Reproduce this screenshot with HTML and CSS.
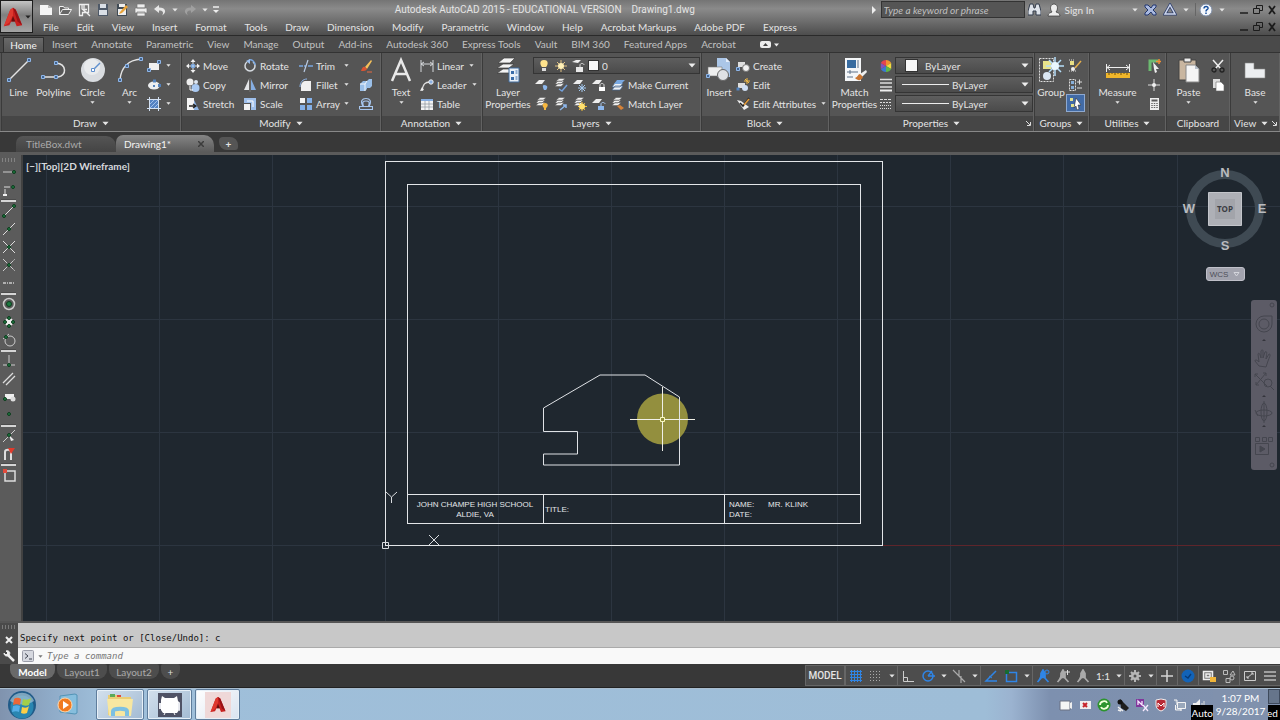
FILE: index.html
```html
<!DOCTYPE html>
<html lang="en">
<head>
<meta charset="utf-8">
<title>Autodesk AutoCAD 2015 - Drawing1.dwg</title>
<link rel="stylesheet" href="styles.css">
</head>
<body>
<svg class="sprite" aria-hidden="true">
  <symbol id="arr" viewBox="0 0 8 5"><path d="M0.5 0.5h7L4 4.5z" fill="currentColor"/></symbol>
  <symbol id="winmin" viewBox="0 0 12 12"><path d="M2 9h8" stroke="#1c1c1c" stroke-width="1.5"/></symbol>
  <symbol id="winres" viewBox="0 0 12 12"><path d="M4.500 4.500v-3h6v5h-3M1.500 4.500h6v5h-6z" fill="none" stroke="#1c1c1c"/></symbol>
  <symbol id="winx" viewBox="0 0 12 12"><path d="M3 2l6 8M9 2L3 10" stroke="#1c1c1c" stroke-width="1.800"/></symbol>
  <symbol id="sheets" viewBox="0 0 14 14"><path d="M1 8.500l3-3h6l-3 3z M1 6l3-3h6l-3 3z M2 3.500l3-3h6l-3 3z" fill="#f1f1f1" stroke="#555" stroke-width=".5"/></symbol>
  <symbol id="sheet" viewBox="0 0 14 14"><path d="M0 6l4-4h6l-3 4z" fill="#ededed"/></symbol>
  <symbol id="fig" viewBox="0 0 14 14"><path d="M7 1v6L1.500 13M7 7l5.500 6M5 4.500L7 1l2 3.500v4H5z" fill="currentColor" stroke="currentColor" stroke-width="1.700"/></symbol>
  <symbol id="acad" viewBox="0 0 24 24"><path d="M12 2l3 2 7 17-6 1-2-5h-4l-2 4-6 1L9 4z" fill="#c8201f"/><path d="M12 2L9 4 2 22l6-4 4-8z" fill="#de382f"/><path d="M10 17l2-6 2.500 6z" fill="#661010"/><path d="M12 2l3 2 7 17-5-4z" fill="#991116"/></symbol>
</svg>

<header class="top">
  <button class="appbtn" aria-label="Application menu"><svg width="22" height="26"><use href="#acad"/></svg><svg class="arr" width="6" height="4"><use href="#arr"/></svg></button>
  <div class="bars">
    <div class="titlebar">
      <div class="qat">
        <button aria-label="New"><svg width="14" height="14"><path d="M1 2h8l4 3v7H1z" fill="#f5f5f5"/><path d="M9 2v3h4" fill="#bbb"/></svg></button>
        <button aria-label="Open"><svg width="14" height="14"><path d="M1.500 11.500v-8h4l1 1.500h4v2M1.500 11.500l3-5h9l-3 5z" fill="#666" stroke="#f1f1f1"/></svg></button>
        <button aria-label="Open from cloud"><svg width="14" height="14"><path d="M2.500 1.500h9v8h-6v3h-3zM5 1v5l5 4 3 3M7 1.500v5h3" fill="#777" stroke="#eee" stroke-width="1.300"/></svg></button>
        <button aria-label="Save"><svg width="14" height="14"><path d="M2 1h10v12H2z" fill="#4e5968"/><path d="M4 1h6v4H4zM3 7h8v5H3z" fill="#dadfe6"/></svg></button>
        <button aria-label="Save as"><svg width="14" height="14"><path d="M2 1h10v12H2z" fill="#414b55"/><path d="M4 1h6v3H4zM3 6h8v6H3z" fill="#eee"/><path d="M5 9l6-7 2 2-6 6-3 1z" fill="#e8a33a"/></svg></button>
        <button aria-label="Plot"><svg width="14" height="14"><path d="M3 1h8v4H3zM1 5h12v5H1zM3 9h8v4H3z" fill="#eee" stroke="#777" stroke-width=".7"/></svg></button>
        <button aria-label="Undo"><svg width="14" height="14"><path d="M6 2L1 6l5 4V7.500c4 0 5 2 3 5 5-3 4-8-3-8z" fill="#e6e6e6"/></svg></button>
        <button class="slim" aria-label="Undo list"><svg width="6" height="4"><use href="#arr"/></svg></button>
        <button class="dim" aria-label="Redo"><svg width="14" height="14"><path d="M8 2l5 4-5 4V7.500c-4 0-5 2-3 5C0 9.500 1 4.500 8 4.500z" fill="#a0a0a0"/></svg></button>
        <button class="slim" aria-label="Redo list"><svg width="6" height="4"><use href="#arr"/></svg></button>
        <button class="slim" aria-label="Customize"><svg width="8" height="8"><path d="M1 1h6" stroke="#eee" stroke-width="1.500"/><path d="M1 4h6L4 7z" fill="#eee"/></svg></button>
      </div>
      <h1 class="title"><span>Autodesk AutoCAD 2015 - EDUCATIONAL VERSION</span><span>Drawing1.dwg</span></h1>
      <div class="info">
        <svg width="5" height="8"><path d="M1 0l4 4-4 4z" fill="#eee"/></svg>
        <input class="search" type="text" placeholder="Type a keyword or phrase" aria-label="Search">
        <button aria-label="Find"><svg width="13" height="14"><path d="M2 1h3l1 4h1l1-4h3l2 7v4H8V8H5v4H0V8z" fill="#dde2ea" stroke="#333c4c"/></svg></button>
        <button class="sign"><svg width="14" height="14"><path d="M1 13c0-3 3-3.500 4-4-3-4-1-8 2-8s5 4 2 8c1 .5 4 1 4 4z" fill="#eee" stroke="#333" stroke-width=".7"/></svg>Sign In</button>
        <svg class="arrow" width="6" height="4"><use href="#arr"/></svg>
        <button aria-label="Exchange"><svg width="13" height="12"><path d="M1 1h3l3 3 2-3h3v2L9 6l3 3v2H9L7 8l-3 3H1V9l3-3-3-3z" fill="#a9b9e0" stroke="#22376f"/></svg></button>
        <button aria-label="A360"><svg width="14" height="13"><path d="M7 2l5 9H2z" fill="none" stroke="#30406d" stroke-width="3"/><path d="M7 2l5 9H2z" fill="none" stroke="#cfd8ee" stroke-width="1.500"/></svg></button>
        <svg class="arrow" width="6" height="4"><use href="#arr"/></svg>
        <i class="rule"></i>
        <button aria-label="Help"><svg width="14" height="14"><circle cx="7" cy="7" r="6" fill="#f5f7fb" stroke="#7f8fa9"/><path d="M5 5.500C5 2.500 9.500 3 9 5.500 8.500 7 7 6.500 7 8.500M7 9.500v1.500" fill="none" stroke="#174f9d" stroke-width="1.500"/></svg></button>
        <svg class="arrow" width="6" height="4"><use href="#arr"/></svg>
      </div>
      <div class="win"><button aria-label="Minimize"><svg width="12" height="12"><use href="#winmin"/></svg></button><button aria-label="Restore"><svg width="12" height="12"><use href="#winres"/></svg></button><button aria-label="Close"><svg width="12" height="12"><use href="#winx"/></svg></button></div>
    </div>
    <div class="menubar">
      <nav class="menus"><button>File</button><button>Edit</button><button>View</button><button>Insert</button><button>Format</button><button>Tools</button><button>Draw</button><button>Dimension</button><button>Modify</button><button>Parametric</button><button>Window</button><button>Help</button><button>Acrobat Markups</button><button>Adobe PDF</button><button>Express</button></nav>
      <div class="win"><button aria-label="Minimize drawing"><svg width="12" height="12"><use href="#winmin"/></svg></button><button aria-label="Restore drawing"><svg width="12" height="12"><use href="#winres"/></svg></button><button aria-label="Close drawing"><svg width="12" height="12"><use href="#winx"/></svg></button></div>
    </div>
  </div>
</header>

<nav class="tabs">
  <button class="on">Home</button><button>Insert</button><button>Annotate</button><button>Parametric</button><button>View</button><button>Manage</button><button>Output</button><button>Add-ins</button><button>Autodesk 360</button><button>Express Tools</button><button>Vault</button><button>BIM 360</button><button>Featured Apps</button><button>Acrobat</button>
  <button class="mini" aria-label="Minimize ribbon"><svg width="19" height="7"><rect x="0" y="0" width="11" height="7" rx="2" fill="#eee"/><path d="M3 5l2.500-3L8 5z" fill="#444"/><path d="M14 2.500h5l-2.500 3z" fill="#eee"/></svg></button>
</nav>

<main class="ribbon">
  <section class="panel">
    <div class="body draw">
      <button class="big"><svg width="26" height="26"><path d="M3 23L23 3" stroke="#e3e3e3" stroke-width="1.500"/><path d="M1.500 21.500h3v3h-3zM21.500 1.500h3v3h-3z" fill="#42658f" stroke="#8fb6ea"/></svg>Line</button>
      <button class="big"><svg width="26" height="26"><path d="M2 20h15c9-1 9-13-2-14" fill="none" stroke="#e3e3e3" stroke-width="1.500"/><path d="M.5 18.500h3v3h-3zM13.500 18.500h3v3h-3zM13.500 4.500h3v3h-3z" fill="#42658f" stroke="#8fb6ea"/></svg>Polyline</button>
      <button class="big"><svg width="26" height="26"><circle cx="13" cy="13" r="12" fill="#d9dce0"/><circle cx="12" cy="10" r="8" fill="#e9ebed"/><path d="M13 13l7-7" stroke="#5f8fce" stroke-width="1.500"/><path d="M11.500 11.500h3v3h-3z" fill="#fff" stroke="#5f8fce"/></svg>Circle<svg class="arr" width="5" height="3"><use href="#arr"/></svg></button>
      <button class="big"><svg width="26" height="26"><path d="M3 23C4 10 12 3 24 2" fill="none" stroke="#e3e3e3" stroke-width="1.500"/><path d="M1.500 21.500h3v3h-3zM8.500 7.500h3v3h-3zM22.500.5h3v3h-3z" fill="#42658f" stroke="#8fb6ea"/></svg>Arc<svg class="arr" width="5" height="3"><use href="#arr"/></svg></button>
      <div class="rows">
        <button aria-label="Rectangle"><svg width="14" height="14"><path d="M2 4h10v7H2z" fill="#f0f0f0"/><path d="M.5 9.500h3v3h-3zM10.500 1.500h3v3h-3z" fill="#42658f" stroke="#8fb6ea"/></svg><svg class="arr" width="5" height="3"><use href="#arr"/></svg></button>
        <button aria-label="Ellipse"><svg width="14" height="14"><ellipse cx="7" cy="7.500" rx="6" ry="4" fill="#eceef0"/><path d="M6 1.500h3v3H6zM11 6h3v3h-3zM6 7h2v2H6z" fill="#5482bb"/></svg><svg class="arr" width="5" height="3"><use href="#arr"/></svg></button>
        <button aria-label="Hatch"><svg width="14" height="14"><path d="M3 3h8v8H3z" fill="#5482c2"/><path d="M3 7l4-4M3 11l8-8M7 11l4-4" stroke="#b5cff2" stroke-width=".8"/><path d="M2.500 0v14M11.500 0v14M0 2.500h14M0 11.500h14" stroke="#d4e1f3"/></svg><svg class="arr" width="5" height="3"><use href="#arr"/></svg></button>
      </div>
    </div>
    <h2>Draw<svg width="7" height="5"><use href="#arr"/></svg></h2>
  </section>

  <section class="panel">
    <div class="body modify">
      <div class="rows">
        <button><svg width="14" height="14"><path d="M7 0l2.500 3h-5zM7 14l2.500-3h-5zM0 7l3-2.500v5zM14 7l-3-2.500v5z" fill="#f1f1f1"/><path d="M5.500 5.500h3v3h-3z" fill="#9cc2ec" stroke="#78a4dc"/><path d="M7 3v2M7 9v2M3 7h2M9 7h2" stroke="#dfe8f2"/></svg>Move</button>
        <button><svg width="14" height="14"><circle cx="4" cy="4" r="3.500" fill="#eee"/><circle cx="10" cy="4" r="2" fill="#dfe8f3"/><circle cx="9.500" cy="10" r="4" fill="#a9c9f2"/><path d="M4 8v4h3" stroke="#fff" fill="none"/></svg>Copy</button>
        <button><svg width="14" height="14"><path d="M1 1h7v12H1z" fill="#f4f4f4"/><path d="M8 3l5 10H8z" fill="#8eb4e6"/><path d="M3 9h6M7 7l3 2-3 2" stroke="#222" fill="none" stroke-width="1.300"/></svg>Stretch</button>
      </div>
      <div class="rows">
        <button><svg width="14" height="14"><path d="M4 3a5 5 0 1 0 6 0" fill="none" stroke="#d5dae0" stroke-width="1.500"/><path d="M6 1c3-1 6 2 6 5" fill="none" stroke="#79a6df" stroke-width="1.500"/><path d="M7 0v5L3 2z" fill="#9cbfed"/></svg>Rotate</button>
        <button><svg width="14" height="14"><path d="M6 1v11H1z" fill="#e4e6e8"/><path d="M8 1v11h5z" fill="#86aee2"/><path d="M7 0v14" stroke="#777"/></svg>Mirror</button>
        <button><svg width="14" height="14"><path d="M1 1h12v12H8V6H1z" fill="#9fc0ec"/><path d="M1 7h6v6H1z" fill="#f2f2f2"/><path d="M4 4h6v6" fill="none" stroke="#fff"/></svg>Scale</button>
      </div>
      <div class="rows">
        <button class="push"><svg width="14" height="14"><path d="M0 7h4M5 7h2M9 7h5" stroke="#79a6df" stroke-width="1.500"/><path d="M9 1L5 13" stroke="#b9cbe3" stroke-width="1.200"/></svg>Trim<svg class="arr" width="5" height="3"><use href="#arr"/></svg></button>
        <button class="push"><svg width="14" height="14"><path d="M2 13V8c0-3 2-5 5-5h5v10z" fill="#f0f0f0"/><path d="M1 9c0-5 3-8 7-8" fill="none" stroke="#8fb6ea"/></svg>Fillet<svg class="arr" width="5" height="3"><use href="#arr"/></svg></button>
        <button class="push"><svg width="14" height="14"><path d="M1 1h5v5H1z" fill="#f5f5f5"/><path d="M8 1h5v5H8zM1 8h5v5H1zM8 8h5v5H8z" fill="#84b0e8"/></svg>Array<svg class="arr" width="5" height="3"><use href="#arr"/></svg></button>
      </div>
      <div class="rows">
        <button aria-label="Erase"><svg width="14" height="14"><path d="M6 8l6-7 1 1-5 8z" fill="#f5c15b"/><path d="M2 12c1-3 2-5 4-4l2 2c-1 2-3 2-6 2z" fill="#d95432"/><path d="M8 13h5" stroke="#e86b42"/></svg></button>
        <button aria-label="Explode"><svg width="14" height="14"><path d="M1 6l3-3h4v8l-2 2H1zM8 3l2-2h3v7l-2 2H8z" fill="#9abfe8"/><path d="M1 6h5l2-3M6 6v7" stroke="#f3f6fa" fill="none"/></svg></button>
        <button aria-label="Offset"><svg width="14" height="14"><path d="M1 12.500h12.500V9.500H10C13 4 11 1.500 7 1.500S1 4 4 9.500H.5v3M4.500 9.500h5C11 5 10 4 7 4S3 5 4.500 9.500z" fill="none" stroke="#a7c7ef" stroke-width="1.200"/></svg></button>
      </div>
    </div>
    <h2>Modify<svg width="7" height="5"><use href="#arr"/></svg></h2>
  </section>

  <section class="panel">
    <div class="body anno">
      <button class="big"><svg width="22" height="26"><path d="M2 24L11 3l9 21M5 17h12" fill="none" stroke="#e8e8e8" stroke-width="2.500"/></svg>Text<svg class="arr" width="5" height="3"><use href="#arr"/></svg></button>
      <div class="rows">
        <button><svg width="14" height="14"><path d="M1 1v12M13 1v12M1 5h12M4 3L1 5l3 2M10 3l3 2-3 2" fill="none" stroke="#d6d9dc"/></svg>Linear<svg class="arr" width="5" height="3"><use href="#arr"/></svg></button>
        <button><svg width="14" height="14"><path d="M2 13c1-7 3-9 8-9" fill="none" stroke="#e0e0e0" stroke-width="1.300"/><path d="M0 13l2-4 2 3z" fill="#eee"/><circle cx="11" cy="4" r="2.200" fill="#8cb1e3" stroke="#eee"/></svg>Leader<svg class="arr" width="5" height="3"><use href="#arr"/></svg></button>
        <button><svg width="14" height="14"><path d="M1 2h12v11H1z" fill="#f3f3f3"/><path d="M1 2h12v2H1z" fill="#86aee2"/><path d="M1 7h12M1 10h12M5 4v9M9 4v9" stroke="#8a929c" stroke-width=".7"/></svg>Table</button>
      </div>
    </div>
    <h2>Annotation<svg width="7" height="5"><use href="#arr"/></svg></h2>
  </section>

  <section class="panel">
    <div class="body layers">
      <button class="big"><svg width="26" height="26"><path d="M2 16l6-4h11l-5 4zM2 11l6-4h11l-5 4zM3 6l6-5h11l-5 5z" fill="#f4f4f4" stroke="#3e3e3e" stroke-width=".7"/><path d="M14 11h10v14H14z" fill="#e9f0f8" stroke="#406a9b"/><path d="M16 14h3v3h-3zM16 20h3v3h-3z" fill="#376ba9"/><path d="M20.500 14h2M20.500 16h2M20.500 20h2M20.500 22h2" stroke="#376ba9"/></svg><span>Layer<br>Properties</span></button>
      <div class="lay-right">
        <div class="combo">
          <svg width="14" height="14"><path d="M7 1c5 0 4 5 2 7H5C3 6 2 1 7 1z" fill="#ffe38d"/><path d="M5 9h4v3H5z" fill="#ddd"/></svg>
          <svg width="14" height="14"><path d="M7 1v12M1 7h12M3 3l8 8M11 3l-8 8" stroke="#e0c080"/><circle cx="7" cy="7" r="3" fill="#fff0b6"/></svg>
          <svg width="14" height="14"><path d="M1 3l4-2h5L7 4z" fill="#eee"/><path d="M5 8h7v5H5z" fill="#e9e9e9"/><path d="M9 8V6c0-2 4-2 4 0" stroke="#ddd" fill="none"/></svg>
          <i class="swatch"></i>
          <select aria-label="Layer"><option>0</option></select><svg class="carr" width="8" height="5"><use href="#arr"/></svg>
        </div>
        <div class="icons">
          <button aria-label="Layer off"><svg width="14" height="14"><use href="#sheet"/><path d="M9 7c5 0 3 4 2 5H9C8 10 7 7 9 7z" fill="#8db7ec"/></svg></button>
          <button aria-label="Isolate"><svg width="14" height="14"><use href="#sheets"/><path d="M5 11l3 2 5-6" fill="none" stroke="#74a1db" stroke-width="1.500"/></svg></button>
          <button aria-label="Freeze"><svg width="14" height="14"><use href="#sheet"/><path d="M9 6v8M5 10h8M6 7l6 6M12 7l-6 6" stroke="#a8cdf4"/></svg></button>
          <button aria-label="Lock layer"><svg width="14" height="14"><use href="#sheet"/><path d="M7 9h6v4H7z" fill="#fff"/><path d="M8 9V7c0-2 4-2 4 0v2" fill="none" stroke="#ddd"/></svg></button>
          <button><svg width="14" height="14"><path d="M1 12l3-4h8l-3 4zM1 9l3-4h8l-3 4z" fill="#eef2f6" stroke="#42648f" stroke-width=".7"/><path d="M3 6l3-4h8l-4 4z" fill="#79a9e2"/></svg>Make Current</button>
        </div>
        <div class="icons">
          <button aria-label="Layers on"><svg width="14" height="14"><use href="#sheets"/><path d="M10 6c4 0 3 4 1 5v2H9v-2C7 9 7 6 10 6z" fill="#f5b741"/></svg></button>
          <button aria-label="Unisolate"><svg width="14" height="14"><use href="#sheets"/><path d="M6 13l6-5M9 8h3v3" fill="none" stroke="#8db7ec" stroke-width="1.500"/></svg></button>
          <button aria-label="Thaw"><svg width="14" height="14"><use href="#sheets"/><path d="M9 5v9M5 9.500h9M6 6l6 7M12 6l-6 7" stroke="#f1bd37"/><circle cx="9" cy="9.500" r="3" fill="#ffe06e"/></svg></button>
          <button aria-label="Unlock layer"><svg width="14" height="14"><use href="#sheet"/><path d="M6 9h6v4H6z" fill="#8db7ec"/><path d="M9 9V7c0-2 4-2 4 0" fill="none" stroke="#a9c9f0"/></svg></button>
          <button><svg width="14" height="14"><use href="#sheets"/><path d="M6 9l4 4 3-2-4-3z" fill="#d68238"/></svg>Match Layer</button>
        </div>
      </div>
    </div>
    <h2>Layers<svg width="7" height="5"><use href="#arr"/></svg></h2>
  </section>

  <section class="panel">
    <div class="body block">
      <button class="big"><svg width="26" height="26"><path d="M11 1h9l4 4v15H11z" fill="#abc6e7"/><path d="M20 1v4h4" fill="#e5eefb"/><path d="M2 10h14v9H2z" fill="#eee" stroke="#777" stroke-width=".6"/><circle cx="17" cy="18" r="5.500" fill="#dfe1e4" stroke="#666"/><path d="M.5 17.500h3v3h-3z" fill="#42658f" stroke="#8fb6ea"/></svg>Insert</button>
      <div class="rows">
        <button><svg width="14" height="14"><path d="M2 3h7v5H2z" fill="#dedede"/><circle cx="10" cy="9" r="3.500" fill="#f2f2f2" stroke="#777"/><path d="M.5 8.500h3v3h-3z" fill="#42658f" stroke="#8fb6ea"/></svg>Create</button>
        <button><svg width="14" height="14"><path d="M2 5h7v5H2z" fill="#dedede"/><circle cx="9" cy="10" r="3" fill="#cfdef3"/><path d="M11 0v6M8 3h6M9 1l4 4" stroke="#f2ba45"/><path d="M.5 9.500h3v3h-3z" fill="#5485c0"/></svg>Edit</button>
        <button><svg width="14" height="14"><path d="M1 3l4 1 8 6-5 3z" fill="#eee"/><path d="M4 6l3 3 6-8" fill="none" stroke="#222" stroke-width="1.500"/><path d="M8 8l5-6" stroke="#e49a38" stroke-width="1.500"/></svg>Edit Attributes<svg class="arr" width="5" height="3"><use href="#arr"/></svg></button>
      </div>
    </div>
    <h2>Block<svg width="7" height="5"><use href="#arr"/></svg></h2>
  </section>

  <section class="panel">
    <div class="body props">
      <button class="big"><svg width="26" height="26"><path d="M3 1h16v23H3z" fill="#f4f6f8"/><path d="M5 3h9v8H5z" fill="#376ba0"/><path d="M16 3v8M5 15h11M8 13v4M5 20h6" stroke="#5d7188"/><path d="M18 17l6-4 1 2-5 5z" fill="#eee"/><path d="M13 21c3-1 3-4 5-4l3 3c-2 4-5 4-8 1z" fill="#c87532"/></svg><span>Match<br>Properties</span></button>
      <div class="proprows">
        <div class="prow"><svg width="14" height="14"><path d="M7 7V1a6 6 0 0 1 5.200 3z" fill="#ef9231"/><path d="M7 7l5.200-3v6z" fill="#f4dc3d"/><path d="M7 7l5.200 3A6 6 0 0 1 7 13z" fill="#5cb64b"/><path d="M7 7v6a6 6 0 0 1-5.200-3z" fill="#3b79d1"/><path d="M7 7l-5.200 3V4z" fill="#8452bd"/><path d="M7 7L1.800 4A6 6 0 0 1 7 1z" fill="#e54350"/></svg><div class="combo"><i class="swatch big-sw"></i><select aria-label="Color"><option>ByLayer</option></select><svg class="carr" width="8" height="5"><use href="#arr"/></svg></div></div>
        <div class="prow"><svg width="14" height="14"><path d="M1 1.500h12M1 5h12M1 9h12" stroke="#ddd" stroke-width="1.500"/><path d="M1 12.500h12" stroke="#eee" stroke-width="2"/></svg><div class="combo"><i class="wire"></i><select aria-label="Lineweight"><option>ByLayer</option></select><svg class="carr" width="8" height="5"><use href="#arr"/></svg></div></div>
        <div class="prow"><svg width="14" height="14"><path d="M1 2.500h12" stroke="#ddd" stroke-dasharray="3 1"/><path d="M1 5.500h12" stroke="#ddd" stroke-dasharray="2 1"/><path d="M1 8.500h12M1 11.500h12" stroke="#ddd" stroke-dasharray="1 1"/></svg><div class="combo"><i class="wire"></i><select aria-label="Linetype"><option>ByLayer</option></select><svg class="carr" width="8" height="5"><use href="#arr"/></svg></div></div>
      </div>
    </div>
    <h2>Properties<svg width="7" height="5"><use href="#arr"/></svg><svg class="launch" width="5" height="5"><path d="M0 0l4 4M4.500 1v3.500H1" fill="none" stroke="#ddd"/></svg></h2>
  </section>

  <section class="panel">
    <div class="body groups">
      <button class="big"><svg width="26" height="26"><path d="M1.500 1.500h14v23h-14z" fill="none" stroke="#ddd" stroke-dasharray="2 1"/><path d="M5 4h8v8H5z" fill="#e8e58b"/><circle cx="9" cy="19" r="4" fill="#dbe8f4"/><path d="M17 0v19M8 9h18M11 3l12 12M23 3L11 15" stroke="#b5defa" stroke-width="1.500"/><circle cx="17" cy="9" r="4" fill="#e9f8ff"/></svg>Group</button>
      <div class="rows">
        <button aria-label="Ungroup"><svg width="14" height="14"><path d="M2 2h4v4H2z" fill="#e8df84"/><circle cx="5" cy="10" r="2" fill="#eee"/><path d="M7 9l6-7" stroke="#e7b14d" stroke-width="1.500"/><path d="M1 1h6M1 12h7" stroke="#ddd" stroke-dasharray="1 1"/></svg></button>
        <button aria-label="Group edit"><svg width="14" height="14"><path d="M1.500 1.500h6v11h-6z" fill="none" stroke="#ddd" stroke-dasharray="2 1"/><path d="M3 3h3v3H3zM3 8h3v3H3z" fill="#88afd8"/><path d="M9 4h5M11.500 1.500v5M9 10h5" stroke="#ddd"/></svg></button>
        <button class="active" aria-label="Group selection"><svg width="14" height="14"><path d="M1 2h3v3H1zM2 8h3v3H2z" fill="#e5e48f"/><path d="M7 2l5 7H9l1 4-2 1-1-4-2 2z" fill="#fff" stroke="#222" stroke-width=".5"/></svg></button>
      </div>
    </div>
    <h2>Groups<svg width="7" height="5"><use href="#arr"/></svg></h2>
  </section>

  <section class="panel">
    <div class="body utils">
      <button class="big"><svg width="26" height="26"><path d="M1.500 7v8M24.500 7v8M2 10.500h22M5 8l-3 2.500L5 13M21 8l3 2.500-3 2.500" fill="none" stroke="#eee"/><path d="M1 16h24v5H1z" fill="#f0b62b"/><path d="M4 16v2M7 16v1M10 16v2M13 16v1M16 16v2M19 16v1M22 16v2" stroke="#73510c"/></svg>Measure<svg class="arr" width="5" height="3"><use href="#arr"/></svg></button>
      <div class="rows">
        <button aria-label="Quick select"><svg width="14" height="14"><path d="M3 12V2h8" fill="none" stroke="#6cba70" stroke-width="3"/><path d="M6 3l6 7H9l1 3-2 1-1-4z" fill="#eee"/><path d="M12 0v5M9 2.500h5" stroke="#f09037" stroke-width="1.500"/></svg></button>
        <button aria-label="Point"><svg width="14" height="14"><path d="M7 1v12M1 7h12" stroke="#ddd"/><circle cx="7" cy="7" r="2" fill="#eee"/></svg></button>
        <button aria-label="Calculator"><svg width="14" height="14"><path d="M3 1h9v12H3z" fill="#eee"/><path d="M4.500 2.500h6v2h-6z" fill="#5b5b5b"/><path d="M5 6v6M7.500 6v6M10 6v6" stroke="#666" stroke-width="1.500" stroke-dasharray="1 1"/></svg></button>
      </div>
    </div>
    <h2>Utilities<svg width="7" height="5"><use href="#arr"/></svg></h2>
  </section>

  <section class="panel">
    <div class="body clip">
      <button class="big"><svg width="26" height="26"><path d="M3 3h17v20H3z" fill="#c9b6a0" stroke="#444"/><path d="M8 1h7v4H8z" fill="#ededed" stroke="#444"/><path d="M10 8h9l4 4v13H10z" fill="#f5f5f5" stroke="#888"/><path d="M19 8v4h4" fill="#b6bfca"/></svg>Paste<svg class="arr" width="5" height="3"><use href="#arr"/></svg></button>
      <div class="rows">
        <button aria-label="Cut"><svg width="14" height="14"><path d="M2 1l8 9M12 1L4 10" stroke="#eee" stroke-width="1.500"/><circle cx="3" cy="11" r="2" fill="none" stroke="#222" stroke-width="1.300"/><circle cx="11" cy="11" r="2" fill="none" stroke="#222" stroke-width="1.300"/></svg></button>
        <button aria-label="Copy clip"><svg width="14" height="14"><path d="M2 1h7v9H2z" fill="#ddd"/><path d="M5 4h5l3 3v6H5z" fill="#fff" stroke="#666" stroke-width=".6"/></svg></button>
      </div>
    </div>
    <h2>Clipboard</h2>
  </section>

  <section class="panel">
    <div class="body view">
      <button class="big"><svg width="26" height="26"><path d="M3 6h9v6h11v9H3z" fill="#eceef0" stroke="#888" stroke-width=".6"/></svg>Base<svg class="arr" width="5" height="3"><use href="#arr"/></svg></button>
    </div>
    <h2 class="left">View<svg width="7" height="5"><use href="#arr"/></svg><svg class="launch" width="5" height="5"><path d="M0 0l4 4M4.500 1v3.500H1" fill="none" stroke="#ddd"/></svg></h2>
  </section>
</main>

<nav class="doctabs">
  <button class="doc">TitleBox.dwt</button><button class="doc on">Drawing1*<svg width="6" height="6"><path d="M0 0l6 6M6 0L0 6" stroke="#3c3c3c" stroke-width="1.500"/></svg></button><button class="plus" aria-label="New tab">+</button>
</nav>

<div class="work">
  <aside class="osnap">
    <i class="grip"></i>
    <button aria-label="Temporary track point"><svg width="14" height="14"><path d="M1 7h9" stroke="#ccc"/><circle cx="12" cy="7" r="1.500" class="g"/></svg></button>
    <button aria-label="From"><svg width="14" height="14"><path d="M2 4h8M3 6v7" stroke="#ddd" stroke-dasharray="6 1"/><circle cx="11" cy="4" r="1.500" class="g"/><path d="M1 11h4v2H1z" fill="#eee"/></svg></button>
    <hr>
    <button aria-label="Endpoint"><svg width="14" height="14"><path d="M2 12L12 2" stroke="#ddd"/><circle cx="2" cy="12" r="1.500" class="g"/><circle cx="12" cy="2" r="1.500" class="g"/></svg></button>
    <button aria-label="Midpoint"><svg width="14" height="14"><path d="M1 13L13 1" stroke="#ddd"/><circle cx="7" cy="7" r="1.500" class="g"/></svg></button>
    <button aria-label="Intersection"><svg width="14" height="14"><path d="M1 13L13 1M1 1l12 12" stroke="#ddd"/><circle cx="7" cy="7" r="1.500" class="g"/></svg></button>
    <button aria-label="Apparent intersection"><svg width="14" height="14"><path d="M1 13L13 1M1 1l12 12" stroke="#ccc" stroke-dasharray="6 1 1 1"/><circle cx="7" cy="7" r="1.500" class="g"/></svg></button>
    <button aria-label="Extension"><svg width="14" height="14"><path d="M1 7h12" stroke="#ccc" stroke-width="1.500" stroke-dasharray="3 1 1 1"/></svg></button>
    <hr>
    <button aria-label="Center"><svg width="14" height="14"><circle cx="7" cy="7" r="5.500" fill="none" stroke="#ccc" stroke-width="1.500"/><circle cx="7" cy="7" r="2.500" class="g"/></svg></button>
    <button aria-label="Quadrant"><svg width="14" height="14"><circle cx="7" cy="7" r="4" fill="#eee"/><circle cx="7" cy="3" r="1.500" class="g"/><circle cx="7" cy="11" r="1.500" class="g"/><circle cx="3" cy="7" r="1.500" class="g"/><circle cx="11" cy="7" r="1.500" class="g"/></svg></button>
    <button aria-label="Tangent"><svg width="14" height="14"><circle cx="8" cy="8" r="5" fill="none" stroke="#ccc"/><path d="M1 6l6-5" stroke="#ccc"/><circle cx="4" cy="4" r="1.500" class="g"/></svg></button>
    <hr>
    <button aria-label="Perpendicular"><svg width="14" height="14"><path d="M7 1v9M1 11h12" stroke="#ccc"/><circle cx="7" cy="11" r="1.500" class="g"/></svg></button>
    <button aria-label="Parallel"><svg width="14" height="14"><path d="M1 11L11 1M4 13l9-9" stroke="#ddd" stroke-width="1.300"/></svg></button>
    <button aria-label="Insert point"><svg width="14" height="14"><path d="M3 4h9v5H3z" fill="#eee"/><circle cx="11" cy="9" r="2.500" fill="#ddd"/><circle cx="3" cy="9" r="1.500" class="g"/></svg></button>
    <button aria-label="Node"><svg width="14" height="14"><circle cx="7" cy="6" r="1.500" class="g"/></svg></button>
    <hr>
    <button aria-label="Nearest"><svg width="14" height="14"><path d="M1 13L13 1" stroke="#ccc"/><path d="M7 6l5 5-3 1z" fill="#eee"/><circle cx="7" cy="6" r="1.500" class="g"/></svg></button>
    <button aria-label="None"><svg width="14" height="14"><path d="M3 13V5c0-3 6-3 6 0v8" fill="none" stroke="#ddd" stroke-width="2"/><path d="M6 1h7l-4 6z" fill="#df3b2c"/></svg></button>
    <hr>
    <button aria-label="Object snap settings"><svg width="14" height="14"><path d="M3 3h10v10H3z" fill="none" stroke="#ddd" stroke-width="1.500"/><path d="M1 1h4v4H1z" fill="#e04a3b"/></svg></button>
  </aside>
  <div class="canvas">
    <svg class="drawing" viewBox="23 155 1257 466" preserveAspectRatio="xMinYMin slice">
      <g stroke="#2c3540" shape-rendering="crispEdges"><path d="M46 155v466M159 155v466M272 155v466M385 155v466M498 155v466M611 155v466M724 155v466M837 155v466M950 155v466M1063 155v466M1177 155v466M23 206h1257M23 319h1257M23 432h1257M23 545.500h860"/></g>
      <path d="M883 545.500h397" stroke="#5e252b" shape-rendering="crispEdges"/>
      <g fill="none" stroke="#e2e5e8" shape-rendering="crispEdges">
        <path d="M385.500 161.500h497v384h-497zM407.500 184.500h453v339h-453zM407.500 494.500h453M543.500 494v29M724.500 494v29"/>
      </g>
      <circle cx="662.500" cy="419" r="25.500" fill="#938f3e"/>
      <path d="M543.500 408L600 375h45l34.500 22v68h-136v-11h34v-22.500h-34z" fill="none" stroke="#dfe2e6"/>
      <path d="M630 419.500h65M662.500 387v64" stroke="#f0f0e8"/>
      <path d="M660.500 417.500h4v4h-4z" fill="#938f3e" stroke="#fbfbbd"/>
      <path d="M382.500 542.500h6v6h-6zM429 535l10 10M439 535l-10 10M386 492l5.500 5v6M397 492l-5.500 5" fill="none" stroke="#d9dce0"/>
      <g class="cadtext"><text x="475" y="507" text-anchor="middle">JOHN CHAMPE HIGH SCHOOL</text><text x="475" y="517" text-anchor="middle">ALDIE, VA</text><text x="545" y="512">TITLE:</text><text x="729" y="507">NAME:</text><text x="768" y="507">MR. KLINK</text><text x="729" y="517">DATE:</text></g>
    </svg>
    <div class="vlabel">[−][Top][2D Wireframe]</div>
    <div class="cube">
      <svg width="86" height="86"><circle cx="43" cy="43" r="34.500" fill="none" stroke="#3f4a53" stroke-width="9"/><path d="M26.500 26.500h33v33h-33z" fill="#aeb0b6" stroke="#c3c5ca"/><path d="M33 33h20v20H33z" fill="#a2a4aa"/><g class="dir"><text x="43" y="11">N</text><text x="43" y="84">S</text><text x="7" y="47">W</text><text x="80" y="47">E</text></g><text class="face" x="43" y="46">TOP</text></svg>
      <button class="wcs">WCS<svg width="7" height="5"><path d="M1 .5h5L3.500 4z" fill="none" stroke="#d4d5dc"/></svg></button>
    </div>
    <div class="navbar">
      <svg viewBox="0 0 26 170" width="26" height="170" fill="none" stroke="#45464f"><circle cx="21" cy="5" r="2"/><path d="M5 24a8 8 0 0 1 8-8h8v8a8 8 0 0 1-16 0z"/><circle cx="13" cy="24" r="5"/><path d="M11 41l2-2 2 2zM11 97l2-2 2 2zM11 127l2-2 2 2z" fill="#34353c" stroke="none"/><path d="M8 66l-4-5c0-2 2-1 4 1l-1-8c1-2 2 0 3 4V51c1-2 2-1 2 0v7l2-6c2-1 2 0 1 7l3-5c2 0 1 2-1 7l-2 6z"/><path d="M4 74l12 12M15 73L5 85M4 77v-3h3M12 73h3v3M5 82v3h3"/><circle cx="17" cy="83" r="4"/><path d="M19 86l4 4"/><ellipse cx="13" cy="113" rx="8" ry="3"/><ellipse cx="13" cy="112" rx="3" ry="9"/><path d="M4 110l3 6M13 101v22"/><path d="M4.500 137.500h4v4h-4zM11.500 137.500h4v4h-4zM17.500 137.500h4v4h-4zM4.500 143.500h13v11h-13z"/><path d="M9 146l5 3-5 3z" fill="#45464f"/><circle cx="21" cy="165" r="2"/></svg>
    </div>
  </div>
</div>

<section class="cmd">
  <div class="cmdside"><i class="grip"></i><button aria-label="Close"><svg width="8" height="8"><path d="M1 1l6 6M7 1L1 7" stroke="#eee" stroke-width="2"/></svg></button><button aria-label="Customize"><svg width="12" height="12"><path d="M4 4l7 7" stroke="#eee" stroke-width="2.500"/><path d="M1 3l2 2 2-2-2-2c3-1 5 2 3 4S1 6 1 3z" fill="#eee" stroke="#eee"/></svg></button></div>
  <div class="cmdmain">
    <p>Specify next point or [Close/Undo]: c</p>
    <div class="entry"><svg width="12" height="12"><rect x=".5" y=".5" width="11" height="11" rx="1" fill="#d6d8df" stroke="#9b9da8"/><path d="M3 3.500l3 2.500-3 2.500M7 9h3" fill="none" stroke="#3f4450"/></svg><svg class="garr" width="5" height="3"><use href="#arr"/></svg><input type="text" placeholder="Type a command" aria-label="Command"></div>
  </div>
</section>

<footer class="status">
  <nav class="lay"><button class="on">Model</button><button>Layout1</button><button>Layout2</button><button class="add" aria-label="New layout">+</button></nav>
  <div class="tools">
    <button class="model">MODEL</button>
    <div class="grp"><button aria-label="Grid"><svg width="14" height="14"><path d="M2.500 1v12M5.500 1v12M8.500 1v12M11.500 1v12M1 2.500h12M1 5.500h12M1 8.500h12M1 11.500h12" stroke="#2f85e6"/></svg></button><button aria-label="Snap"><svg width="14" height="14"><path d="M1 2.500h12M1 5.500h12M1 8.500h12M1 11.500h12" stroke="#aaa" stroke-dasharray="1 2"/></svg></button><button class="ar" aria-label="Snap options"><svg width="6" height="4"><use href="#arr"/></svg></button></div>
    <div class="grp"><button aria-label="Ortho"><svg width="14" height="14"><path d="M2.500 2v10.500H13M2.500 8.500h4v4" fill="none" stroke="#ccc"/></svg></button><button aria-label="Polar"><svg width="14" height="14"><circle cx="7" cy="7" r="5" fill="none" stroke="#2f85e6" stroke-width="1.500"/><path d="M7 7h7M7 7l4-5" stroke="#2f85e6" stroke-width="1.300"/></svg></button><button class="ar" aria-label="Polar options"><svg width="6" height="4"><use href="#arr"/></svg></button><button aria-label="Isodraft"><svg width="14" height="14"><path d="M1 1l12 12M7 1v6M9 7v7" stroke="#aaa" stroke-width="1.200"/></svg></button><button class="ar" aria-label="Isodraft options"><svg width="6" height="4"><use href="#arr"/></svg></button></div>
    <div class="grp"><button aria-label="Tracking"><svg width="14" height="14"><path d="M12 2L2 12h11" fill="none" stroke="#2f85e6" stroke-width="1.500"/><path d="M5 7l3 2" stroke="#2f85e6"/></svg></button><button aria-label="Object snap"><svg width="14" height="14"><path d="M2.500 3.500h10v9h-10z" fill="none" stroke="#2f85e6" stroke-width="1.500"/><path d="M1 1h4v4H1z" fill="#176b32"/></svg></button><button class="ar" aria-label="Snap list"><svg width="6" height="4"><use href="#arr"/></svg></button></div>
    <div class="grp"><button class="blue" aria-label="Annotation visibility"><svg width="14" height="14"><use href="#fig"/><circle cx="11" cy="3" r="2" fill="#555" stroke="currentColor"/></svg></button><button class="grey" aria-label="Auto scale"><svg width="14" height="14"><use href="#fig"/><path d="M9 3h5M11.500 1v5" stroke="#ddd"/></svg></button><button class="grey" aria-label="Annotation scale"><svg width="14" height="14"><use href="#fig"/></svg></button><button>1:1</button><button class="ar" aria-label="Scale list"><svg width="6" height="4"><use href="#arr"/></svg></button></div>
    <div class="grp"><button aria-label="Workspace"><svg width="14" height="14"><path d="M7 1v12M1 7h12M3 3l8 8M11 3l-8 8" stroke="#b5b5b5" stroke-width="2"/><circle cx="7" cy="7" r="4" fill="#b5b5b5"/><circle cx="7" cy="7" r="1.500" fill="#505050"/></svg></button><button class="ar" aria-label="Workspace list"><svg width="6" height="4"><use href="#arr"/></svg></button></div>
    <div class="grp"><button aria-label="Monitor"><svg width="14" height="14"><path d="M7 1v12M1 7h12" stroke="#d5d5d5" stroke-width="1.500"/></svg></button></div>
    <div class="grp"><button aria-label="Hardware"><svg width="14" height="14"><circle cx="7" cy="7" r="6.500" fill="#1263b8"/><path d="M4 7l3 2 3-4" stroke="#073a77" stroke-width="1.300" fill="none"/></svg></button></div>
    <div class="grp"><button aria-label="Lock"><svg width="14" height="14"><path d="M1.500 2.500h9v8h-9zM4 5h4v3H4z" fill="#777" stroke="#eee" stroke-width="1.500"/><path d="M8 8h6v5H8z" fill="#f0b53b"/></svg></button><button aria-label="Isolate objects"><svg width="14" height="14"><path d="M1.500 1.500h4v4h-4zM8 6l3-4 2 4zM4 9.500h4v4H4z" fill="none" stroke="#bbb"/><circle cx="10" cy="9" r="2" fill="none" stroke="#bbb"/></svg></button></div>
    <div class="grp"><button aria-label="Clean screen"><svg width="14" height="14"><path d="M1.500 2.500h11v9h-11zM4 9l6-5M8 4h2v2M4 7v2h2" fill="none" stroke="#ccc"/></svg></button><button aria-label="Customization"><svg width="14" height="14"><path d="M1 3h12M1 7h12M1 11h12" stroke="#bbb" stroke-width="1.500"/></svg></button></div>
  </div>
</footer>

<footer class="taskbar">
  <button class="start" aria-label="Start"><svg width="30" height="30"><circle cx="15" cy="15" r="14" fill="#205b88"/><circle cx="15" cy="17" r="11.500" fill="#2986b1"/><path d="M3 11C7 0 23 0 27 11 20 16 10 15 3 11z" fill="#a4c3d4" opacity=".7"/><path d="M7 9c3-2 5-1 7 0l-1 6c-2-1-5-1-7 0z" fill="#ec6837"/><path d="M16 9c3 1 5 1 8-1l-2 7c-2 1-4 1-7 0z" fill="#a3cf49"/><path d="M6 16c3-1 5-1 7 0l-1 6c-2-1-4-1-7 0z" fill="#55aee7"/><path d="M15 17c3 1 5 1 7-1l-2 7c-2 1-4 1-6 0z" fill="#fbce46"/></svg></button>
  <button class="app" aria-label="Media player"><svg width="24" height="24"><path d="M4 3l15-2 2 1v18l-2 1-15-2z" fill="#86bedd" stroke="#5293b6"/><circle cx="9" cy="12" r="7" fill="#f17a20" stroke="#ffd9ae"/><path d="M7 8l6 4-6 4z" fill="#fff"/></svg></button>
  <button class="app open" aria-label="Explorer"><svg width="28" height="26"><path d="M2 3h9l2 2h12v18H2z" fill="#e9cd75"/><path d="M4 2h5v3H4z" fill="#5aa959"/><path d="M11 3h4v2h-4z" fill="#de4b3b"/><path d="M1 7h26l-2 17H3z" fill="#f7e7a1"/><path d="M7 24v-5c0-3 14-3 14 0v5" fill="none" stroke="#7cc0e2" stroke-width="4"/></svg></button>
  <button class="app open" aria-label="Camera"><svg width="26" height="26"><path d="M1 1h24v24H1z" fill="#4f5265"/><path d="M4 8l1-4 3 2h9l3-2 1 5 1 1v8l-2 3H6l-2-3z" fill="#fff"/><path d="M21 11l2-1v9l-2-1zM2 11h2v6H2z" fill="#e8eaf0"/><path d="M8 21l-1 2M17 21l1 2" stroke="#fff"/></svg></button>
  <button class="app open current" aria-label="AutoCAD"><svg class="cadico" width="26" height="26"><use href="#acad" x="4" y="3" width="18" height="19"/></svg></button>
  <div class="tray">
    <svg width="14" height="14"><path d="M1 3h10v9H1z" fill="#f5f5f5" stroke="#6b7182"/><path d="M11 5l2-1v7l-2-1z" fill="#eee"/></svg>
    <svg width="14" height="14"><path d="M2 3h11v8H2z" fill="#eee"/><path d="M5 5l4 4M9 5l-4 4" stroke="#c6242a" stroke-width="2"/></svg>
    <svg width="14" height="14"><circle cx="7" cy="7" r="6.500" fill="#2c942d"/><path d="M3 7c0-4 6-5 7-2M11 7c0 4-6 5-7 2" fill="none" stroke="#efffd7" stroke-width="1.800"/></svg>
    <svg width="14" height="14"><path d="M4 1l4 4 5 5-3 3-5-3z" fill="#1e1e1e"/><path d="M2 9l5 4M2 12l3 1" stroke="#eee" stroke-width="1.500"/><circle cx="4" cy="4" r="2.500" fill="#111"/></svg>
    <svg width="14" height="14"><path d="M1 1h8v8H1z" fill="#81369b"/><path d="M3 7V3l4 4V3M8 7l5 6M13 7l-5 6" stroke="#f8e9ff" fill="none" stroke-width="1.300"/></svg>
    <svg width="14" height="14"><path d="M2 2l5-1 5 1v5c0 3-2 5-5 6-3-1-5-3-5-6z" fill="#b82a36" stroke="#eee"/><path d="M4 9V5l3 3 3-3v4" fill="none" stroke="#fff"/></svg>
    <svg width="14" height="14"><path d="M4.500 4.500h8v6h-8zM1 2h3v5M2.500 7v5h6M8 11v2" fill="#9aa8bb" stroke="#f4f4f4"/></svg>
    <svg width="14" height="14"><path d="M1 5h3l4-4v12L4 9H1z" fill="#eee"/><path d="M10 5v4M12 3v8" stroke="#ddd"/></svg>
  </div>
  <div class="clock"><span>1:07 PM</span><span>9/28/2017</span></div>
  <button class="peek" aria-label="Show desktop"></button>
  <span class="tip t1">Auto</span><span class="tip t2">ed</span>
</footer>
</body>
</html>
```
FILE: styles.css
```css
* { box-sizing: border-box; }
html, body { height: 100%; }
body { margin: 0; display: flex; flex-direction: column; background: #383838; color: #e4e4e4; font: 10px/12px Lato, "Open Sans", sans-serif; overflow: hidden; }
button, input, select { font: inherit; color: inherit; background: none; border: 0; padding: 0; margin: 0; }
button { display: flex; align-items: center; justify-content: center; white-space: nowrap; }
svg { display: block; flex: none; }
h1, h2, p { margin: 0; font-size: 10px; font-weight: 400; }
.sprite { width: 0; height: 0; position: absolute; }

.top { display: flex; flex: none; height: 36px; background: linear-gradient(#747474, #8a8a8a 25%, #6e6e6e 60%, #4d4d4d); border-bottom: 1px solid #2a2a2a; }
.appbtn { width: 33px; height: 33px; gap: 1px; background: linear-gradient(#c4c4c4, #7f7f7f 45%, #a5a5a5); border: 1px solid #1d1d1d; }
.appbtn .arr { color: #222; }
.bars { flex: 1; display: flex; flex-direction: column; min-width: 0; }
.titlebar { height: 19px; display: flex; align-items: center; }
.qat { display: flex; gap: 5px; padding-left: 6px; }
.qat .slim { width: 6px; }
.title { flex: 1; display: flex; justify-content: center; gap: 10px; white-space: nowrap; font-family: Roboto, sans-serif; }
.info { display: flex; align-items: center; gap: 6px; }
.search { width: 144px; height: 17px; padding: 0 2px; background: #555; border: 1px solid #333; }
.info > svg:first-child { margin-right: -1px; }
.info .search + button { margin-left: -3px; }
.search::placeholder { color: #c0c0c0; font-style: italic; opacity: 1; }
.sign { gap: 4px; }
.sign + .arrow { margin-left: 32px; }
.rule { width: 1px; height: 13px; margin-right: -3px; background: #666; }
.win { display: flex; gap: 2px; padding: 0 2px 0 13px; }
.menubar { height: 16px; display: flex; align-items: center; justify-content: space-between; }
.menus { display: flex; gap: 18px; padding-left: 10px; }

.tabs { flex: none; display: flex; height: 17px; align-items: stretch; padding-left: 3px; gap: 14px; background: #4a4a4a; border-bottom: 1px solid #333; color: #c2c2c2; }
.tabs .on { width: 41px; margin: 1px -6px 0 0; background: linear-gradient(#696969, #555); border: 1px solid #2f2f2f; border-bottom: 0; color: #f4f4f4; }
.mini { margin-left: 10px; }

.ribbon { flex: none; display: grid; grid-template-columns: 180fr 200fr 101fr 219fr 128fr 205fr 55fr 77fr 64fr 50fr; height: 79px; padding-left: 1px; background: #555; border-bottom: 1px solid #888; }
.panel { min-width: 0; display: flex; flex-direction: column; border-left: 1px solid #3b3b3b; border-right: 1px solid #626262; }
.body { flex: 1; display: flex; padding-top: 3px; }
.panel h2 { height: 15px; display: flex; align-items: center; justify-content: center; gap: 5px; background: #464646; line-height: 15px; position: relative; }
.panel .left { justify-content: flex-start; padding-left: 3px; }
.launch { position: absolute; right: 2px; top: 5px; }
.big { flex-direction: column; justify-content: flex-start; line-height: 12px; height: 54px; flex: none; }
.big > svg:first-child { margin: 1px 0 3px; }
.big .arr { margin-top: 3px; }
.big span { text-align: center; }
.rows { display: flex; flex-direction: column; }
.rows button { height: 19px; justify-content: flex-start; gap: 3px; }
.rows .arr { margin-left: 2px; }
.push .arr { margin-left: auto; }
.draw .big { width: 33px; }
.draw .big:nth-child(2) { width: 37px; }
.draw .big:nth-child(3) { width: 41px; }
.draw .rows { padding-left: 1px; }
.modify { display: grid; grid-template-columns: 57px 56px 58px 1fr; padding-left: 4px; }
.modify .rows:nth-child(3) { padding-right: 8px; }
.modify .rows:nth-child(4) { padding-left: 2px; }
.anno .big { width: 38px; }
.layers .big { width: 50px; }
.lay-right { flex: 1; min-width: 0; }
.combo { display: flex; align-items: center; gap: 3px; height: 17px; margin: 1px 0; padding: 0 3px; background: linear-gradient(#5e5e5e, #4b4b4b); border: 1px solid #353535; flex: 1; min-width: 0; }
.combo select { flex: 1; min-width: 0; appearance: none; outline: 0; }
.combo .carr { color: #eee; }
.swatch { width: 11px; height: 11px; background: #f7f7f7; border: 1px solid #333; }
.icons { display: flex; height: 19px; padding-left: 2px; gap: 5px; align-items: center; }
.icons button { gap: 3px; }
.block .big { width: 34px; }
.props .big { width: 49px; }
.proprows { flex: 1; min-width: 0; }
.prow { display: flex; align-items: center; gap: 2px; }
.big-sw { width: 13px; height: 13px; margin: 0 4px 0 6px; }
.wire { width: 47px; height: 1px; margin-left: 3px; background: #eee; }
.groups .big { width: 32px; }
.groups .rows { padding-left: 1px; }
.groups .active { width: 19px; height: 18px; justify-content: center; margin-left: -2px; background: #426ba6; border: 1px solid #8ea9d0; }
.utils .big { width: 55px; }
.utils .rows { padding-left: 2px; }
.clip .big { width: 43px; }
.clip .rows { padding-left: 1px; }
.view .big { width: 48px; }

.doctabs { flex: none; display: flex; align-items: flex-end; height: 23px; padding-left: 16px; background: #383838; border-bottom: 3px solid #5b5b5b; }
.doc { width: 100px; height: 16px; padding: 0 10px; justify-content: flex-start; background: linear-gradient(#555, #444); color: #aaa; border-radius: 7px 10px 0 0; }
.doc.on { height: 17px; width: 98px; padding: 0 10px 0 8px; justify-content: space-between; background: linear-gradient(#858585, #5b5b5b); color: #f4f4f4; }
.plus { width: 19px; height: 13px; margin: 0 0 2px 5px; background: #555; border-radius: 4px 8px 3px 8px; font-weight: 700; }

.work { flex: 1; display: flex; min-height: 0; background: #5b5b5b; }
.osnap { width: 23px; flex: none; padding: 2px 4px 0 0; display: flex; flex-direction: column; align-items: stretch; border-right: 2px solid #414141; }
.grip { height: 4px; margin: 1px 2px 1px; background: repeating-linear-gradient(90deg, #aaa 0 1px, transparent 1px 3px); opacity: .5; }
.osnap button { height: 18px; flex: none; }
.osnap hr { width: 15px; height: 3px; margin: 0 auto; border: 0; border-top: 1px solid #4b4b4b; border-bottom: 2px solid #d5d5d5; flex: none; }
.g { fill: #1c7a41; stroke: #0d3c1d; }
.canvas { flex: 1; min-width: 0; position: relative; background: #1f272f; overflow: hidden; }
.drawing { width: 100%; height: 100%; }
.cadtext { font: 8px "Liberation Sans", sans-serif; fill: #e3e6e9; }
.vlabel { position: absolute; left: 3px; top: 5px; font-weight: 700; color: #d7dade; }
.cube { position: absolute; right: 12px; top: 11px; display: flex; flex-direction: column; align-items: center; gap: 15px; }
.dir { font: 700 13px "Liberation Sans", sans-serif; fill: #b9bbbf; text-anchor: middle; }
.face { font: 700 8px "Open Sans", sans-serif; fill: #3b3d43; text-anchor: middle; }
.wcs { width: 39px; height: 14px; gap: 5px; font: 8px "Liberation Sans", sans-serif; color: #4d4f59; background: #a2a3ae; border: 1px solid #bfc0c9; border-radius: 3px; }
.cube svg { overflow: visible; }
.navbar { position: absolute; right: 3px; top: 145px; width: 26px; background: #5c5b66; border-radius: 3px; }

.cmd { flex: none; display: flex; height: 43px; border-top: 2px solid #555; color: #111; }
.cmdside { width: 18px; background: #4a4a4a; display: flex; flex-direction: column; gap: 6px; padding-top: 1px; }
.cmdmain { flex: 1; min-width: 0; background: #c8c8c8; font: 9px/12px "DejaVu Sans Mono", monospace; }
.cmdmain p { padding: 9px 2px 0; height: 24px; font: inherit; }
.entry { height: 17px; display: flex; align-items: center; gap: 4px; padding-left: 4px; background: #f9f9f9; border-top: 1px solid #aaa; }
.garr { color: #777; }
.entry input { flex: 1; }
.entry input::placeholder { color: #777; opacity: 1; font-style: italic; }

.status { flex: none; display: flex; justify-content: space-between; height: 24px; background: #383838; border-bottom: 1px solid #222; }
.lay { display: flex; align-items: flex-start; padding-left: 10px; gap: 2px; color: #aaa; }
.lay button { width: 50px; height: 15px; background: #4d4d4d; border-radius: 2px 2px 9px 9px; }
.lay .on { width: 45px; background: #696969; color: #fff; font-weight: 700; }
.lay .add { width: 19px; color: #ddd; }
.tools { display: flex; align-items: stretch; gap: 1px; padding: 1px 0; }
.tools .model, .grp { border: 1px solid #666; background: #4d4d4d; }
.tools .model { width: 40px; font-family: Roboto, sans-serif; font-weight: 500; }
.grp { display: flex; border-width: 1px 0; box-shadow: -1px 0 #666; }
.grp button { width: 20px; }
.grp .ar { width: 11px; }
.blue { color: #2f85e6; }
.grey { color: #aaa; }

.taskbar { flex: none; height: 32px; display: flex; align-items: center; position: relative; overflow: hidden; background: linear-gradient(90deg, #8093ae, #8fabc8 4%, #9fbfda 8%, #9ebdd7 77%, #9bb3d0 79%, #7d90af 82%, #8091ad); border-top: 1px solid #a9bdcf; }
.start { width: 43px; }
.app { width: 48px; height: 31px; margin-right: 3px; }
.app:nth-child(2) { width: 50px; }
.open { background: linear-gradient(135deg, #d3e0ed, #a3bbd3); border: 1px solid #5f7d9c; box-shadow: inset 0 0 0 1px #e7f0f8; border-radius: 2px; }
.open + .open { width: 45px; }
.current { background: linear-gradient(135deg, #fff, #d9e3f0); }
.cadico { background: #efd8d8; }
.tray { margin-left: auto; display: flex; gap: 5px; padding-right: 7px; }
.clock { width: 55px; height: 100%; padding-top: 3px; z-index: 1; display: flex; flex-direction: column; align-items: center; gap: 1px; color: #fff; background: #8091ad; }
.peek { align-self: flex-start; width: 12px; height: 15px; background: #66758b; border: 1px solid #3e4a5c; }
.tip { position: absolute; bottom: 0; height: 15px; line-height: 17px; background: #000; color: #fff; }
.t1 { right: 67px; padding-left: 1px; }
.t2 { right: 0; width: 14px; padding-left: 1px; }
```
